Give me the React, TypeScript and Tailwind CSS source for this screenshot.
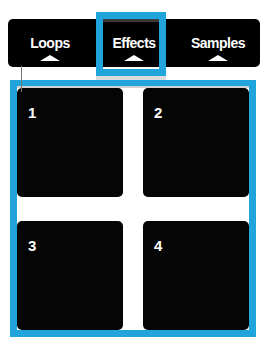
import React from "react";

const Tab = ({ label }: { label: string }) => (
  <div className="flex flex-col items-center justify-center pt-[11px]">
    <span className="text-[14px] font-bold leading-none text-white tracking-[-0.5px]" style={{ fontFamily: '"Liberation Sans", Arial, sans-serif' }}>
      {label}
    </span>
    <svg width="20" height="6" viewBox="0 0 20 6" className="mt-[5px]">
      <polygon points="0,6 10,0 20,6" fill="#ffffff" />
    </svg>
  </div>
);

const Pad = ({ n }: { n: string }) => (
  <div className="rounded-[5px] bg-[#050505] pl-[11px] pt-[12px]">
    <span className="text-[15px] font-bold leading-none text-white" style={{ fontFamily: '"Liberation Sans", Arial, sans-serif' }}>
      {n}
    </span>
  </div>
);

export default function App() {
  return (
    <div className="relative w-[262px] h-[340px] bg-white overflow-hidden">
      <div className="ml-[8px] mr-[2px] mt-[19px] h-[48px] rounded-[5px] bg-black grid grid-cols-3">
        <Tab label="Loops" />
        <Tab label="Effects" />
        <Tab label="Samples" />
      </div>
      <div className="ml-[10px] mr-[6px] mt-[13px] h-[257px] border-x-[7px] border-b-[7px] border-t-[6px] border-[#1fa5dc] flex flex-col">
        <div className="h-[2px] bg-[#cfcfcf]" />
        <div className="flex-1 grid grid-cols-2 grid-rows-2 gap-x-[20px] gap-y-[24px]">
          <Pad n="1" />
          <Pad n="2" />
          <Pad n="3" />
          <Pad n="4" />
        </div>
      </div>
      {/* highlight box over Effects tab */}
      <div className="absolute left-[96px] top-[12px] w-[70px] h-[64px] border-[7px] border-[#1fa5dc]">
        <div className="h-[3px] bg-[#3a3a3a]" />
      </div>
      <div className="absolute left-[96px] top-[76px] w-[70px] h-[4px] bg-[#dcdcdc]" />
      {/* leader line */}
      <div className="absolute left-[21px] top-[66px] w-[1px] h-[26px] bg-[#777777]" />
    </div>
  );
}
